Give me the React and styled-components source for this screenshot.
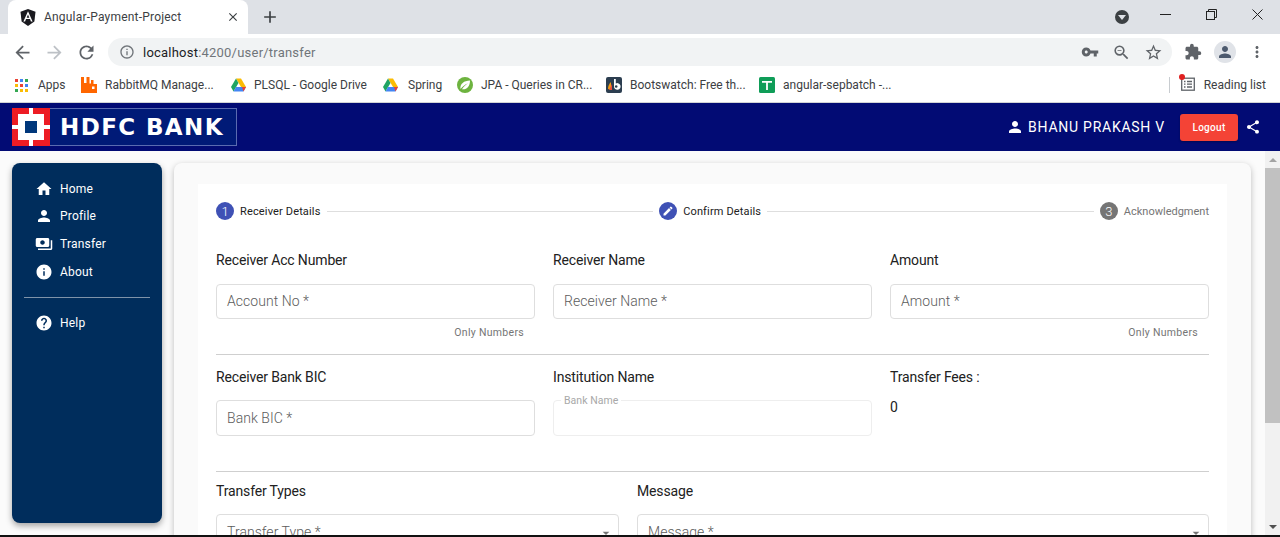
import React from "react";
import styled, { createGlobalStyle } from "styled-components";
import {
  MdHome, MdPerson, MdPayments, MdInfo, MdHelp, MdShare, MdEdit,
  MdArrowBack, MdArrowForward, MdRefresh, MdInfoOutline, MdVpnKey, MdZoomOut,
  MdStarBorder, MdExtension, MdMoreVert, MdClose, MdAdd, MdArrowDropDown,
} from "react-icons/md";

const Global = createGlobalStyle`
  html, body { margin: 0; padding: 0; height: 100%; overflow: hidden; background: #fff; }
  * { box-sizing: border-box; }
  #root { height: 537px; }
`;

const Page = styled.div`
  width: 1280px; height: 537px; display: flex; flex-direction: column; overflow: hidden;
  font-family: Roboto, "Liberation Sans", sans-serif;
  svg { flex: none; }
`;

/* ---------- browser chrome ---------- */
const TabStrip = styled.div`
  height: 34px; flex: none; background: #dee1e6; display: flex; align-items: flex-end; padding-left: 8px;
`;
const Tab = styled.div`
  width: 240px; height: 34px; background: #fff; border-radius: 8px 8px 0 0;
  display: flex; align-items: center; padding: 0 8px 0 12px; color: #3c4043;
  font-size: 12px; letter-spacing: .2px;
  svg:last-child { margin-left: auto; }
`;
const TabTitle = styled.span` margin-left: 8px; `;
const NewTab = styled.div`
  width: 32px; height: 34px; display: flex; align-items: center; justify-content: center; margin-left: 6px; color: #3c4043;
`;
const WindowControls = styled.div`
  margin-left: auto; height: 34px; display: flex; align-items: center; color: #222;
`;
const ProfileDot = styled.div`
  width: 14px; height: 14px; border-radius: 50%; background: #3c4043; margin-right: 13px;
  display: flex; align-items: center; justify-content: center;
  &::after { content: ""; border: 4px solid transparent; border-top: 5px solid #dee1e6; border-bottom: 0; }
`;
const WinButton = styled.div`
  width: 46px; height: 28px; margin-bottom: 6px; display: flex; align-items: center; justify-content: center;
`;
const Toolbar = styled.div`
  height: 34px; flex: none; background: #fff; display: flex; align-items: center; padding: 2px 0 0 14px; color: #5f6368;
`;
const NavIcon = styled.div`
  width: 16px; display: flex; justify-content: center; margin-right: ${p => p.$mr}px;
  color: ${p => p.$off ? "#bdc1c6" : "#5f6368"};
`;
const UrlBar = styled.div`
  width: 1064px; height: 28px; margin-left: 14px; background: #f1f3f4; border-radius: 14px;
  display: flex; align-items: center; padding: 0 9px 0 11px; font-size: 13px; letter-spacing: .22px; color: #70757a;
`;
const UrlHost = styled.span` color: #202124; margin-left: 8px; `;
const UrlTools = styled.div`
  margin-left: auto; display: flex; align-items: center; gap: 13px; color: #5f6368;
`;
const ToolSet = styled.div`
  display: flex; align-items: center; margin-left: 12px; color: #5f6368;
`;
const Avatar = styled.div`
  width: 22px; height: 22px; border-radius: 50%; background: #e0e3e8; margin: 0 12px;
  display: flex; align-items: center; justify-content: center; color: #4d5a6e;
`;
const BookmarkBar = styled.div`
  height: 35px; flex: none; background: #fff; display: flex; align-items: center; padding-left: 15px;
  border-bottom: 1px solid #d2d4d6; font-size: 12px; color: #3c4043; white-space: nowrap;
`;
const Bookmark = styled.div`
  display: flex; align-items: center; gap: ${p => p.$gap || 8}px; width: ${p => p.$w}px; flex: none;
`;
const ReadingList = styled.div`
  margin-left: auto; display: flex; align-items: center; height: 20px; padding-right: 14px;
`;
const Separator = styled.div` width: 1px; height: 16px; background: #c8ccd0; margin-right: 11px; `;
const ReadingIcon = styled.div` position: relative; margin-right: 9px; height: 16px; `;
const RedDot = styled.span`
  position: absolute; left: -2px; top: -3px; width: 6px; height: 6px; border-radius: 50%; background: #e02020;
`;

/* ---------- app header ---------- */
const Header = styled.header`
  height: 48px; flex: none; background: #020b74; display: flex; align-items: center; padding: 0 19px 0 12px; color: #fff;
`;
const Logo = styled.div`
  width: 225px; height: 38px; background: #001a77; border: 1px solid #5a6bb0; display: flex; align-items: center;
`;
const LogoMark = styled.svg` width: 38px; height: 38px; margin: -1px 0 -1px -1px; flex: none; `;
const LogoText = styled.span`
  font-family: "DejaVu Sans", Arial, sans-serif; font-weight: 700; font-size: 23px; letter-spacing: 1.4px; margin-left: 10px; color: #fff;
`;
const UserBlock = styled.div`
  margin-left: auto; display: flex; align-items: center; font-size: 14px; letter-spacing: .75px;
`;
const UserName = styled.span` margin-left: 4px; `;
const LogoutButton = styled.button`
  width: 58px; height: 27px; margin-left: 15px; background: #f44336; color: #fff; border: 0; border-radius: 3px;
  font: 500 10px Roboto, sans-serif; letter-spacing: .3px; box-shadow: 0 1px 2px rgba(0,0,0,.3); padding: 0;
`;
const ShareIcon = styled.div` margin-left: 7px; display: flex; `;

/* ---------- workspace ---------- */
const Workspace = styled.div`
  flex: 1; min-height: 0; display: flex; background: #fbfbfb; overflow: hidden;
`;
const Content = styled.div`
  flex: 1; min-width: 0; display: flex; align-items: flex-start; gap: 12px; padding: 12px 14px 0 12px;
`;
const Sidebar = styled.nav`
  width: 150px; height: 360px; flex: none; background: #002d5c; border-radius: 8px; color: #fff;
  box-shadow: 0 3px 6px rgba(0,0,0,.35); padding: 12px 12px 0; font-size: 12px; letter-spacing: .2px;
`;
const NavItem = styled.div`
  height: 27.6px; display: flex; align-items: center; padding-left: 11px; gap: 7px;
`;
const SideDivider = styled.hr`
  border: 0; border-top: 1px solid #7f93a9; margin: 12px 0 11px;
`;
const Card = styled.main`
  flex: 1; height: 400px; background: #fafafa; border-radius: 8px 8px 0 0; padding: 21px 24px 0;
  box-shadow: 0 2px 6px rgba(0,0,0,.25);
`;
const Panel = styled.div`
  background: #fff; height: 380px; padding: 18px 18px 0;
`;
const Stepper = styled.div`
  display: flex; align-items: center; height: 18px; font-size: 11px; color: #212121;
`;
const StepCircle = styled.div`
  width: 18px; height: 18px; border-radius: 50%; flex: none; color: #fff; font-size: 13px; font-weight: 300;
  background: ${p => p.$muted ? "#757575" : "#3f51b5"};
  display: flex; align-items: center; justify-content: center; margin-right: 6px;
`;
const StepLabel = styled.span`
  color: ${p => p.$muted ? "#757575" : "#212121"}; letter-spacing: ${p => p.$muted ? 0 : .15}px; white-space: nowrap;
`;
const StepLine = styled.div` flex: 1; height: 1px; background: #dedede; margin: 0 6px; `;

const Row = styled.div`
  display: grid; grid-template-columns: ${p => p.$cols || "319px 319px 319px"}; column-gap: 18px;
  margin-top: ${p => p.$mt || 0}px;
`;
const Field = styled.div` display: flex; flex-direction: column; min-width: 0; `;
const Label = styled.div`
  height: 20px; line-height: 20px; font-size: 14px; letter-spacing: -.15px; color: #212121;
`;
const InputBox = styled.div`
  position: relative; height: ${p => p.$h || 35}px; margin-top: ${p => p.$mt || 14}px; background: #fff;
  border: 1px solid ${p => p.$disabled ? "#eeeeee" : "#dedede"}; border-radius: 4px;
  display: flex; align-items: center; padding: 0 10px ${p => p.$h ? 0 : 1}px; font-size: 14px; font-weight: 300; letter-spacing: .05px; color: #5c5c5c;
`;
const FloatLabel = styled.span`
  position: absolute; left: 7px; top: -6px; background: #fff; padding: 0 3px; font-size: 10.5px; font-weight: 400; line-height: 12px; color: #a8a8a8;
`;
const SelectArrow = styled.span`
  position: absolute; right: 4px; top: 10px; color: #757575; display: flex;
`;
const Hint = styled.div`
  height: 14px; line-height: 14px; margin-top: 7px; padding-right: 11px; text-align: right; font-size: 10.5px; letter-spacing: .3px; color: #757575;
`;
const Value = styled.div` margin-top: 10px; height: 20px; line-height: 20px; font-size: 14px; color: #212121; `;
const Divider = styled.hr`
  border: 0; border-top: 1px solid #cfcfcf; margin: ${p => p.$mt}px 0 ${p => p.$mb}px;
`;

const Scrollbar = styled.div`
  width: 15px; flex: none; background: #f1f1f1; display: flex; flex-direction: column; align-items: center;
`;
const ScrollArrow = styled.div`
  height: 17px; flex: none; display: flex; align-items: center; justify-content: center;
  &::after { content: ""; border: 4px solid transparent;
    ${p => p.$down ? "border-top: 4px solid #505050; border-bottom: 0;" : "border-bottom: 4px solid #a3a3a3; border-top: 0;"} }
`;
const ScrollThumb = styled.div` width: 15px; height: 255px; background: #c1c1c1; flex: none; `;
const ScrollTrack = styled.div` flex: 1; `;
const BottomEdge = styled.div` height: 2px; flex: none; background: #111; `;

/* ---------- small drawings ---------- */
const AngularIcon = () => (
  <svg width="16" height="17" viewBox="0 0 16 17"><path d="M8 0 .5 2.700 1.600 12.600 8 17l6.400-4.400 1.100-9.900z" fill="#1a1a1f"/><path d="M8 2.200 3.400 12.400h1.700l.9-2.300h4l.9 2.300h1.700zm1.300 6.600H6.700L8 5.600z" fill="#fff"/></svg>
);
const AppsIcon = () => (
  <svg width="13" height="13" viewBox="0 0 13 13">
    {[["#ea4335",0,0],["#4285f4",5,0],["#34a853",10,0],["#fbbc05",0,5],["#ea4335",5,5],["#4285f4",10,5],["#34a853",0,10],["#fbbc05",5,10],["#fbbc05",10,10]].map(([c,x,y]) => (
      <rect key={x+"-"+y} x={x} y={y} width="3" height="3" fill={c}/>
    ))}
  </svg>
);
const RabbitIcon = () => (
  <svg width="16" height="16" viewBox="0 0 16 16"><path d="M0 0h3v6h2.500V0h3v6.500H10V3h2.500v4H16v9H0z" fill="#f60"/><rect x="11" y="9.500" width="2.500" height="2.500" fill="#fff"/></svg>
);
const DriveIcon = () => (
  <svg width="15" height="14" viewBox="0 0 15 14">
    <path d="M5 .5h5L15 9h-5z" fill="#fbbc04"/><path d="M5 .5 0 9l2.500 4.500L7.500 5z" fill="#1fa463"/>
    <path d="M2.500 13.500h10L15 9H5z" fill="#4285f4"/><path d="M12.500 13.500 15 9h-4z" fill="#ea4335"/>
  </svg>
);
const SpringIcon = () => (
  <svg width="16" height="16" viewBox="0 0 16 16"><circle cx="8" cy="8" r="8" fill="#6db33f"/><path d="M3.500 12C2.800 7 7 3.500 13 3.500c0 6-3.500 9.500-8 8.700 1.500-2.500 3.500-4.500 6-6-3 1.200-5.500 3.300-7.500 5.800z" fill="#fff"/></svg>
);
const BootswatchIcon = () => (
  <svg width="16" height="16" viewBox="0 0 16 16"><rect width="16" height="16" rx="2" fill="#2c3e50"/><path d="M2 12c0-3 1-5 3-7v8z" fill="#f39c12"/><path d="M3 13 6 7v6z" fill="#e74c3c"/><path d="M8 2h1.800v4.500a3.300 3.300 0 1 1-1.800 2.900z" fill="#fff"/><circle cx="10.200" cy="9.500" r="1.300" fill="#2c3e50"/></svg>
);
const SheetIcon = () => (
  <svg width="16" height="16" viewBox="0 0 16 16"><rect width="16" height="16" rx="1.500" fill="#0f9d58"/><path d="M3 4h10v1.800H8.900V13H7.100V5.800H3z" fill="#fff"/></svg>
);
const ReaderIcon = () => (
  <svg width="14" height="14" viewBox="0 0 14 14" fill="none" stroke="#5f6368" strokeWidth="1.300"><rect x=".7" y="1.200" width="12.600" height="12"/><path d="M3 4.500h1.500M6 4.500h5M3 7.200h1.500M6 7.200h5M3 10h1.500M6 10h5"/></svg>
);
const RestoreIcon = () => (
  <svg width="11" height="11" viewBox="0 0 11 11" fill="none" stroke="#222"><rect x=".5" y="2.500" width="8" height="8"/><path d="M2.500 2.500V.5h8v8h-2"/></svg>
);
const MinIcon = () => <svg width="11" height="11" viewBox="0 0 11 11" stroke="#222"><path d="M0 5.500h11"/></svg>;
const CloseThin = () => <svg width="11" height="11" viewBox="0 0 11 11" stroke="#222"><path d="m.5.500 10 10m0-10-10 10"/></svg>;
const LogoGlyph = () => (
  <LogoMark viewBox="0 0 38 38">
    <rect width="38" height="38" fill="#ed1c24"/>
    <rect x="17" width="4" height="38" fill="#fff"/><rect y="17" width="38" height="4" fill="#fff"/>
    <rect x="6" y="6" width="26" height="26" fill="#fff"/><rect x="13" y="13" width="12" height="12" fill="#00377b"/>
  </LogoMark>
);

const bookmarks = [
  { icon: <AppsIcon />, text: "Apps", w: 66, gap: 10 },
  { icon: <RabbitIcon />, text: "RabbitMQ Manage...", w: 150 },
  { icon: <DriveIcon />, text: "PLSQL - Google Drive", w: 152 },
  { icon: <DriveIcon />, text: "Spring", w: 74, gap: 10 },
  { icon: <SpringIcon />, text: "JPA - Queries in CR...", w: 149 },
  { icon: <BootswatchIcon />, text: "Bootswatch: Free th...", w: 153 },
  { icon: <SheetIcon />, text: "angular-sepbatch -...", w: 140 },
];
const navItems = [
  { icon: <MdHome size={18} />, text: "Home" },
  { icon: <MdPerson size={18} />, text: "Profile" },
  { icon: <MdPayments size={18} />, text: "Transfer" },
  { icon: <MdInfo size={18} />, text: "About" },
];

const TextField = ({ label, placeholder, hint, mt, h }) => (
  <Field>
    <Label>{label}</Label>
    <InputBox $mt={mt} $h={h}>{placeholder}</InputBox>
    {hint && <Hint>{hint}</Hint>}
  </Field>
);
const SelectField = ({ label, placeholder }) => (
  <Field>
    <Label>{label}</Label>
    <InputBox $mt={13} $h={36}>
      {placeholder}
      <SelectArrow><MdArrowDropDown size={16} /></SelectArrow>
    </InputBox>
  </Field>
);

export default function App() {
  return (
    <Page>
      <Global />
      <TabStrip>
        <Tab>
          <AngularIcon />
          <TabTitle>Angular-Payment-Project</TabTitle>
          <MdClose size={14} />
        </Tab>
        <NewTab><MdAdd size={20} /></NewTab>
        <WindowControls>
          <ProfileDot />
          <WinButton><MinIcon /></WinButton>
          <WinButton><RestoreIcon /></WinButton>
          <WinButton><CloseThin /></WinButton>
        </WindowControls>
      </TabStrip>
      <Toolbar>
        <NavIcon $mr={16}><MdArrowBack size={21} /></NavIcon>
        <NavIcon $mr={16} $off><MdArrowForward size={21} /></NavIcon>
        <NavIcon $mr={0}><MdRefresh size={21} /></NavIcon>
        <UrlBar>
          <MdInfoOutline size={16} />
          <UrlHost>localhost</UrlHost>:4200/user/transfer
          <UrlTools>
            <MdVpnKey size={18} />
            <MdZoomOut size={19} />
            <MdStarBorder size={19} />
          </UrlTools>
        </UrlBar>
        <ToolSet>
          <MdExtension size={18} />
          <Avatar><MdPerson size={18} /></Avatar>
          <MdMoreVert size={18} />
        </ToolSet>
      </Toolbar>
      <BookmarkBar>
        {bookmarks.map(b => (
          <Bookmark key={b.text} $w={b.w} $gap={b.gap}>{b.icon}<span>{b.text}</span></Bookmark>
        ))}
        <ReadingList>
          <Separator />
          <ReadingIcon><ReaderIcon /><RedDot /></ReadingIcon>
          Reading list
        </ReadingList>
      </BookmarkBar>

      <Header>
        <Logo>
          <LogoGlyph />
          <LogoText>HDFC BANK</LogoText>
        </Logo>
        <UserBlock>
          <MdPerson size={18} />
          <UserName>BHANU PRAKASH V</UserName>
        </UserBlock>
        <LogoutButton>Logout</LogoutButton>
        <ShareIcon><MdShare size={16} /></ShareIcon>
      </Header>

      <Workspace>
        <Content>
          <Sidebar>
            {navItems.map(n => <NavItem key={n.text}>{n.icon}<span>{n.text}</span></NavItem>)}
            <SideDivider />
            <NavItem><MdHelp size={18} /><span>Help</span></NavItem>
          </Sidebar>
          <Card>
            <Panel>
              <Stepper>
                <StepCircle>1</StepCircle>
                <StepLabel>Receiver Details</StepLabel>
                <StepLine />
                <StepCircle><MdEdit size={12} /></StepCircle>
                <StepLabel>Confirm Details</StepLabel>
                <StepLine />
                <StepCircle $muted>3</StepCircle>
                <StepLabel $muted>Acknowledgment</StepLabel>
              </Stepper>
              <Row $mt={30}>
                <TextField label="Receiver Acc Number" placeholder="Account No *" hint="Only Numbers" />
                <TextField label="Receiver Name" placeholder="Receiver Name *" />
                <TextField label="Amount" placeholder="Amount *" hint="Only Numbers" />
              </Row>
              <Divider $mt={14} $mb={12} />
              <Row>
                <TextField label="Receiver Bank BIC" placeholder="Bank BIC *" mt={13} h={36} />
                <Field>
                  <Label>Institution Name</Label>
                  <InputBox $mt={13} $h={36} $disabled><FloatLabel>Bank Name</FloatLabel></InputBox>
                </Field>
                <Field>
                  <Label>Transfer Fees :</Label>
                  <Value>0</Value>
                </Field>
              </Row>
              <Divider $mt={35} $mb={9} />
              <Row $cols="403px 572px">
                <SelectField label="Transfer Types" placeholder="Transfer Type *" />
                <SelectField label="Message" placeholder="Message *" />
              </Row>
            </Panel>
          </Card>
        </Content>
        <Scrollbar>
          <ScrollArrow />
          <ScrollThumb />
          <ScrollTrack />
          <ScrollArrow $down />
        </Scrollbar>
      </Workspace>
      <BottomEdge />
    </Page>
  );
}
